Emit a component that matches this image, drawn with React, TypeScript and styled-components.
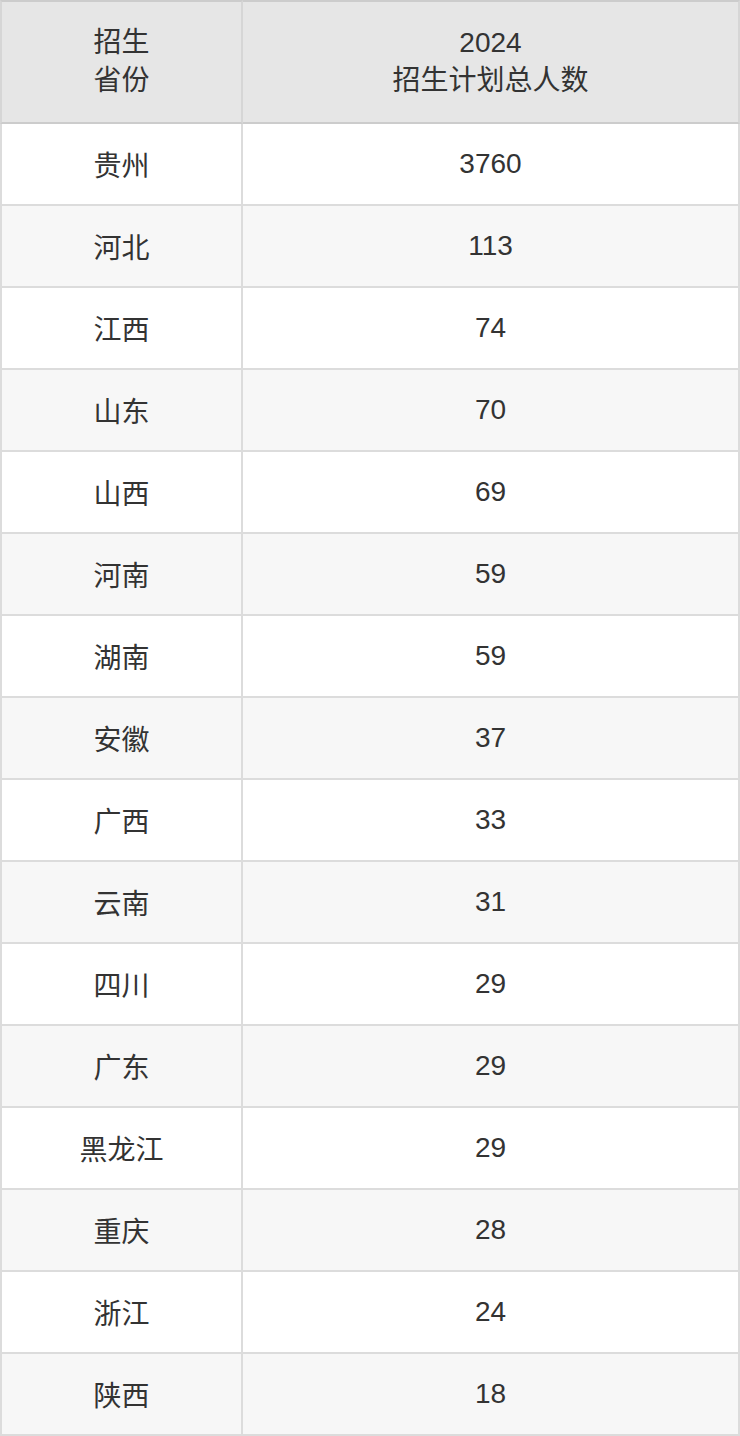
import React from 'react';
import styled, { createGlobalStyle } from 'styled-components';

const GlobalStyle = createGlobalStyle`
  html, body {
    margin: 0;
    padding: 0;
    background: #ffffff;
  }
  body {
    font-family: "Liberation Sans", Arial, "Noto Sans CJK SC", sans-serif;
    color: #333333;
  }
`;

const Table = styled.table`
  width: 740px;
  border-collapse: separate;
  border-spacing: 0;
  table-layout: fixed;
  font-size: 28px;
`;

const HeadCell = styled.th`
  height: 120px;
  padding: 0;
  background: #e6e6e6;
  font-weight: normal;
  line-height: 38px;
  text-align: center;
  vertical-align: middle;
  color: #333333;
  border-top: 2px solid #cccccc;
  border-bottom: 2px solid #cccccc;
  border-right: 2px solid #d6d6d6;

  &:first-child {
    border-left: 2px solid #d6d6d6;
  }
`;

const Row = styled.tr<{ $alt: boolean }>`
  background: ${p => (p.$alt ? '#f7f7f7' : '#ffffff')};
`;

const Cell = styled.td`
  height: 80px;
  padding: 0;
  text-align: center;
  vertical-align: middle;
  border-bottom: 2px solid #dcdcdc;
  border-right: 2px solid #dcdcdc;

  &:first-child {
    border-left: 2px solid #dcdcdc;
  }
`;

const rows: [string, number][] = [
  ['贵州', 3760],
  ['河北', 113],
  ['江西', 74],
  ['山东', 70],
  ['山西', 69],
  ['河南', 59],
  ['湖南', 59],
  ['安徽', 37],
  ['广西', 33],
  ['云南', 31],
  ['四川', 29],
  ['广东', 29],
  ['黑龙江', 29],
  ['重庆', 28],
  ['浙江', 24],
  ['陕西', 18],
];

export default function App() {
  return (
    <>
      <GlobalStyle />
      <Table>
        <colgroup>
          <col style={{ width: 243 }} />
          <col />
        </colgroup>
        <thead>
          <tr>
            <HeadCell>
              招生
              <br />
              省份
            </HeadCell>
            <HeadCell>
              2024
              <br />
              招生计划总人数
            </HeadCell>
          </tr>
        </thead>
        <tbody>
          {rows.map(([province, count], i) => (
            <Row key={province} $alt={i % 2 === 1}>
              <Cell>{province}</Cell>
              <Cell>{count}</Cell>
            </Row>
          ))}
        </tbody>
      </Table>
    </>
  );
}
